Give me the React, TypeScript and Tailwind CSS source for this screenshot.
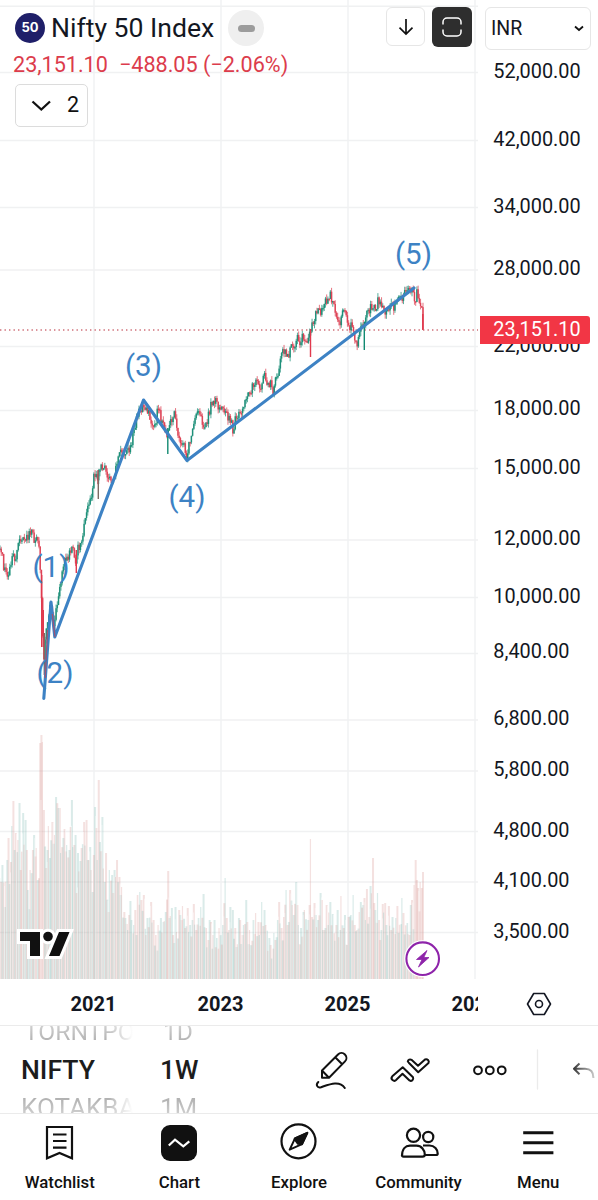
import React from "react";

const PRICE_PATH =
  "0,547 2,555 4,568 7,574 10,568 12,555 13,550 15,560 17,548 20,540 23,541 27,537 30,533 33,530 35,545 37,537 39,545 40,565 41,576 42,632 43,640 44,662 45,640 46,632 48,622 50,605 52,612 54,634 55,620 56,612 57,604 59,588 61,580 63,567 65,560 67,560 69,553 72,548 74,555 76,566 78,548 80,548 82,545 84,525 86,515 88,507 90,500 91,503 92,490 94,475 96,472 98,488 99,470 101,463 103,470 105,465 108,478 110,474 112,482 115,470 118,460 120,453 123,453 126,450 129,453 132,440 134,430 136,420 138,412 140,414 143,402 145,408 147,411 149,415 151,425 153,430 155,425 157,413 159,407 161,420 163,425 165,430 167,440 170,425 172,420 174,412 176,425 178,432 180,445 182,440 184,445 186,460 188,450 190,440 192,435 194,422 196,415 198,412 201,413 203,425 205,430 208,418 211,405 214,400 216,399 218,405 220,408 224,410 227,415 229,420 231,420 233,430 235,421 239,415 243,405 247,400 250,393 252,388 255,380 257,382 259,386 261,387 263,380 265,375 267,382 269,385 271,382 272,393 274,388 276,378 278,373 280,358 282,352 284,352 286,350 287,357 289,353 292,347 295,345 298,338 300,343 302,338 304,340 306,342 308,336 310,335 311,328 313,325 315,318 317,311 319,309 321,315 323,307 325,303 327,302 330,293 332,303 335,311 338,318 340,323 343,310 345,313 347,322 350,328 352,325 354,334 357,344 359,338 361,325 363,328 365,320 367,315 370,309 373,306 376,307 378,300 380,302 383,308 386,311 389,308 392,303 394,308 396,303 399,295 402,298 404,292 407,293 409,291 412,292 414,298 416,307 417,292 419,298 421,303 422,314 423,330";

const VOLUME_PATH =
  "0,878 3,865 5,907 7,860 8,838 9,885 11,862 12,826 13,817 14,801 15,850 16,833 18,840 19,803 20,828 21,870 23,813 25,835 26,820 27,850 28,890 30,890 31,870 33,850 34,835 36,848 38,880 40,845 40.7,743 41.8,735 43,742 44,810 46,868 48,850 49,826 50,858 52,825 53,822 55,835 56.5,797 58,808 60,808 61,853 63,838 65,829 67,845 69,850 71,827 72,800 74,845 76,835 77,893 78,853 80,861 82,848 84,822 86,850 87,820 88,860 90,847 91,870 93,892 94,855 95,807 96,828 98,860 99,780 100.5,842 102,817 103,845 105,882 106,853 108,912 110,870 112,875 113,893 114,870 116,877 117,860 119,877 121,895 122,887 124,912 126,918 128,930 130,901 132,920 134,925 135,910 136,935 138,895 140,892 142,900 144,895 146,935 148,918 151,902 153,930 154,920 156,935 158,925 161,918 163,922 166,912 168,871 169,918 172,908 174,943 175,907 177,932 179,910 181,915 183,906 185,928 188,908 190,925 192,920 194,904 196,930 199,918 201,907 204,894 206,928 208,940 210,920 211,922 213,935 215,920 217,938 220,928 223,925 225.3,878 227,918 229,930 230.5,907 233,910 235,928 237,947 238.5,918 240,920 242,935 244,925 246.5,900 248,922 250,930 253,920 256,913 258,922 260,935 262,902 264,910 266,925 269,938 271,945 274,933 276,940 278,920 279.5,902 282,928 284,917 286.5,890 288,925 290,890 292,905 294,915 296.5,882 298,905 299,925 301,928 303,912 305,910 308,920 310,905 311,839 312,917 314,903 316,915 318,920 320,893 321.5,900 323,930 326,928 327,905 328,925 330,902 333,914 336,925 338,910 340,930 341.5,896 344,928 345,915 347,945 349,917 351,915 353,895 355,925 357,930 359,912 361,902 363,905 364.5,898 366,920 367,889 369,917 370,905 371,886 372.8,858 374,903 376,910 377.5,893 379,920 381,930 383,904 385,903 387,925 389,906 391,930 393,917 396,918 397,906 399,933 402,898 404,913 407,923 409,935 411,905 412,900 414,914 415,885 416,860 417,880 418,888 420,900 421,882 422,888 423,872";

const parse = (s: string) => s.split(" ").map((p) => p.split(",").map(Number));
const prices = parse(PRICE_PATH);
const volumes = parse(VOLUME_PATH);

function at(points: number[][], x: number) {
  for (let i = 1; i < points.length; i++) {
    if (x <= points[i][0]) {
      const [x0, y0] = points[i - 1];
      const [x1, y1] = points[i];
      return y0 + ((y1 - y0) * (x - x0)) / (x1 - x0);
    }
  }
  return points[points.length - 1][1];
}

const noise = (i: number) => {
  const v = Math.sin(i * 127.1 + 11.7) * 43758.5453;
  return v - Math.floor(v);
};

const STEP = 1.219;

function volumeAt(x: number, i: number) {
  const inside = volumes.filter((p) => Math.abs(p[0] - x) <= STEP / 2).map((p) => p[1]);
  return inside.length ? Math.min(...inside) : at(volumes, x) + noise(i + 300) * 22;
}

const BARS = Array.from({ length: 348 }, (_, i) => {
  const x = i * STEP;
  const open = at(prices, Math.max(0, x - STEP)) + (noise(i) - 0.5) * 9;
  const close = at(prices, x) + (noise(i + 1) - 0.5) * 9;
  const high = Math.min(open, close) - noise(i + 500) * 4.5;
  const low = Math.max(open, close) + noise(i + 900) * 4.5;
  return { x, open, close, high, low, up: close < open, volume: volumeAt(x, i) };
});

const RED_SPIKES = [
  [40, 44],
  [310, 312],
  [371.9, 373.6],
  [415, 424],
];

const LONG_WICKS = [
  [41.7, 575, 647, "#e0394d"],
  [43.3, 610, 647, "#e0394d"],
  [44.3, 633, 675, "#8a6560"],
  [76.3, 550, 573, "#e0394d"],
  [98.3, 470, 499, "#7c6a64"],
  [167.8, 428, 454, "#128a72"],
  [310.5, 329, 357, "#e0394d"],
  [364.3, 322, 350, "#128a72"],
  [422.8, 314, 330, "#e0394d"],
] as const;

const LEVELS: [string, number, number][] = [
  ["52,000.00", 72.5, 71],
  ["42,000.00", 140.5, 139],
  ["34,000.00", 207.5, 206],
  ["28,000.00", 270, 268],
  ["22,000.00", 346.5, 345],
  ["18,000.00", 410.5, 408.5],
  ["15,000.00", 468.5, 467],
  ["12,000.00", 540, 538],
  ["10,000.00", 597.5, 596],
  ["8,400.00", 653.5, 651.5],
  ["6,800.00", 720, 718.5],
  ["5,800.00", 771, 769.5],
  ["4,800.00", 831.5, 830],
  ["4,100.00", 882, 880.5],
  ["3,500.00", 932.5, 931],
];

const WAVES: [string, number, number][] = [
  ["(1)", 51, 577],
  ["(2)", 55, 682.5],
  ["(3)", 143.5, 375.5],
  ["(4)", 187, 506.5],
  ["(5)", 413.5, 264],
];

function PriceChart() {
  return (
    <svg width="598" height="979" viewBox="0 0 598 979" className="block font-['Roboto',sans-serif]">
      <g stroke="#f0f1f2" strokeWidth="1.4">
        <path d="M0 6.3H478" />
        {LEVELS.map(([name, y]) => (
          <path key={name} d={`M0 ${y}H478`} />
        ))}
        {[94, 221, 348, 475].map((x) => (
          <path key={x} d={`M${x} 0V979`} />
        ))}
      </g>
      <g>
        {BARS.map((b, i) => {
          const red = RED_SPIKES.some(([from, to]) => b.x > from && b.x < to) || (i + Math.floor(noise(Math.floor(i / 6)) * 2)) % 2 === 0;
          return (
            <rect
              key={i}
              x={b.x - 1}
              y={b.volume}
              width={i % 5 === 0 ? 1.2 : 2}
              height={979 - b.volume}
              fill={red ? "#dc9a98" : "#86beb5"}
              opacity={0.3}
            />
          );
        })}
        {Array.from({ length: 69 }, (_, i) => (
          <rect key={i} x={4 + i * 6.095} y={Math.max(at(volumes, 4 + i * 6.095), 800)} width="0.8" height="180" fill="#fff" opacity="0.6" />
        ))}
      </g>
      <path d="M0 330H478" stroke="#cf7079" strokeWidth="1.3" strokeDasharray="1.4 3.1" />
      {BARS.map((b, i) => (
        <g key={i} fill={b.up ? "#128a72" : "#dc3a4d"}>
          <rect x={b.x - 0.5} y={b.high} width={1} height={b.low - b.high} opacity={0.7} />
          <rect x={b.x - 0.75} y={Math.min(b.open, b.close)} width={1.5} height={Math.max(1.5, Math.abs(b.open - b.close))} opacity={0.85} />
        </g>
      ))}
      {LONG_WICKS.map(([x, y1, y2, color]) => (
        <path key={x} d={`M${x} ${y1}V${y2}`} stroke={color} strokeWidth="1.4" />
      ))}
      <path
        d="M43.8 698.5L51 602L54.8 637L143.5 400L187 460.5L414 288"
        fill="none"
        stroke="#3d82c4"
        strokeWidth="3.1"
        strokeLinecap="round"
        strokeLinejoin="round"
      />
      <path d="M52.3 614L55 637M45.2 678L47.5 630" stroke="#c34257" strokeWidth="1.3" opacity="0.7" />
      <g fill="#3d82c4" fontSize="29.5" textAnchor="middle">
        {WAVES.map(([name, x, y]) => (
          <text key={name} x={x} y={y}>
            {name}
          </text>
        ))}
      </g>
      <g fill="#131722" fontSize="19.9">
        {LEVELS.map(([name, , y]) => (
          <text key={name} x="493.3" y={y + 6.8}>
            {name}
          </text>
        ))}
      </g>
      <path d="M480 316H587a3 3 0 0 1 3 3V341a3 3 0 0 1 -3 3H480Z" fill="#f23645" />
      <text x="493.3" y="336.3" fill="#fff" fontSize="19.9">
        23,151.10
      </text>
      <g stroke="#fff" strokeWidth="6" fill="#fff">
        <path d="M20 932H40V956H30V941H20ZM59 932H69.5L59.5 956H49Z" />
        <circle cx="48" cy="936.5" r="4.8" />
      </g>
      <g fill="#111">
        <path d="M20 932H40V956H30V941H20ZM59 932H69.5L59.5 956H49Z" />
        <circle cx="48" cy="936.5" r="4.8" />
      </g>
      <circle cx="422.7" cy="958.7" r="18.5" fill="#fff" />
      <circle cx="422.7" cy="958.7" r="16.3" fill="#fff" stroke="#8e24aa" strokeWidth="2.1" />
      <path d="M427 950.5L416.5 959.5H422L418.5 967L429 957.5H423.8Z" fill="#8e24aa" stroke="#8e24aa" strokeWidth="0.8" strokeLinejoin="round" />
    </svg>
  );
}

function Header() {
  return (
    <div className="absolute inset-x-0 top-0 flex justify-between pl-[13px] pr-[7px] pt-[7px]">
      <div>
        <div className="flex h-[42px] items-center pl-0.5">
          <span className="flex size-[30px] items-center justify-center rounded-full bg-[#1f1f69] font-['Inter',sans-serif] text-[13px] font-bold text-white">50</span>
          <span className="ml-[6px] mt-px w-[164px] whitespace-nowrap text-[26.6px] leading-none text-[#131722]">Nifty 50 Index</span>
          <span className="ml-[13px] flex size-9 items-center justify-center rounded-full bg-[#efefef]">
            <span className="h-[7px] w-[17px] rounded-full bg-[#9c9c9c]" />
          </span>
        </div>
        <div className="flex h-[32px] items-center gap-[11px] whitespace-nowrap text-[21.6px] text-[#dc3c4c]">
          <span>23,151.10</span>
          <span>−488.05 (−2.06%)</span>
        </div>
        <div className="ml-0.5 mt-[3px] flex h-[43px] w-[73px] items-center justify-between rounded-[5px] border-[1.5px] border-[#dcdcdc] bg-white pl-[15px] pr-[8px] text-[21.5px] text-[#111]">
          <svg width="21" height="12" viewBox="0 0 21 12" fill="none" stroke="#111" strokeWidth="2.3">
            <path d="M1.5 1.5L10.3 9.5L19 1.5" />
          </svg>
          2
        </div>
      </div>
      <div className="flex items-start">
        <button className="flex h-[39px] w-[39px] items-center justify-center rounded-[6px] border-[1.5px] border-[#e6e6e6] bg-white">
          <svg width="16" height="18" viewBox="0 0 16 18" fill="none" stroke="#111" strokeWidth="1.7">
            <path d="M8 1V16M1.5 9.7L8 16L14.5 9.7" />
          </svg>
        </button>
        <button className="ml-[7px] flex size-10 items-center justify-center rounded-[6px] bg-[#2e2e2e]">
          <svg width="20" height="20" viewBox="0 0 20 20" fill="none" stroke="#fff" strokeWidth="1.5">
            <path d="M1 7.5V5a4 4 0 0 1 4-4H15a4 4 0 0 1 4 4V7.5M1 12.5V15a4 4 0 0 0 4 4H15a4 4 0 0 0 4-4V12.5" />
          </svg>
        </button>
        <button className="ml-[13px] flex h-[43px] w-[106px] items-center justify-between rounded-[6px] border-[1.5px] border-[#e6e6e6] bg-white pl-[5px] pr-[6px] text-[19.5px] text-[#131722]">
          INR
          <svg width="10" height="7" viewBox="0 0 10 7" fill="none" stroke="#111" strokeWidth="1.8">
            <path d="M1 1.5L5 5L9 1.5" />
          </svg>
        </button>
      </div>
    </div>
  );
}

function TimeAxis() {
  return (
    <div className="flex h-[47px] items-start border-b-[1.5px] border-[#ebebeb] text-[20px] font-bold text-[#131722]">
      <div className="flex h-[46px] w-[478px] overflow-hidden pl-[30px] pt-[10px]">
        {["2021", "2023", "2025", "2027"].map((year) => (
          <span key={year} className="w-[127px] shrink-0 text-center leading-[30px]">
            {year}
          </span>
        ))}
      </div>
      <svg width="26" height="24" viewBox="0 0 26 24" fill="none" stroke="#131722" strokeWidth="1.6" className="ml-[48px] mt-[13px]" strokeLinejoin="round">
        <path d="M7.7 1.5H18.3L24.5 12L18.3 22.5H7.7L1.5 12Z" />
        <circle cx="13" cy="12" r="3.5" />
      </svg>
    </div>
  );
}

function Wheel({ items, className }: { items: string[]; className: string }) {
  return (
    <div className={`flex h-full flex-col justify-center overflow-hidden whitespace-nowrap leading-[38px] ${className}`}>
      <span className="h-[38px] bg-linear-to-b from-[#e8e8e8] to-[#a0a0a0] bg-clip-text pl-[3px] text-[24.6px] text-transparent">{items[0]}</span>
      <span className="h-[38px] text-[26.6px] font-medium text-[#1c1c1c]">{items[1]}</span>
      <span className="h-[38px] bg-linear-to-b from-[#a0a0a0] to-[#e8e8e8] bg-clip-text text-[26px] text-transparent">{items[2]}</span>
    </div>
  );
}

function Toolbar() {
  return (
    <div className="flex h-[88px] items-center border-b-[1.5px] border-[#ebebeb] pl-[21px]">
      <div className="relative h-full w-[112px]">
        <Wheel items={["TORNTPOWER", "NIFTY", "KOTAKBANK"]} className="w-[112px]" />
        <div className="absolute inset-y-0 right-0 w-[24px] bg-linear-to-r from-transparent to-white" />
      </div>
      <Wheel items={["1D", "1W", "1M"]} className="ml-[27px] w-[61px]" />
      <svg width="377" height="80" viewBox="221 1030 377 80" fill="none" stroke="#111" strokeWidth="2" strokeLinejoin="round" strokeLinecap="round">
        <path d="M322 1077.7V1070.5L338 1054.5A4.9 4.9 0 0 1 345 1061.4L329 1077.7ZM322 1070.5L329 1077.7M335.2 1057.3L342.2 1064.2" />
        <path d="M318.3 1082C315.5 1084.5 317 1088.3 321 1087.2C329 1084.5 339.5 1080 344.8 1088" />
        <path d="M392.3 1076.3L402.7 1067.2L413 1077.3A2.5 2.5 0 0 1 409.5 1080.5L402.5 1073.8L396.3 1079.8A2.6 2.6 0 0 1 392.3 1076.3ZM409 1063L418.2 1072.2L428.5 1063A2.6 2.6 0 0 0 425 1059.5L418 1065.8L411.5 1059.8A2.4 2.4 0 0 0 407.8 1061.5Z" />
        <circle cx="478" cy="1070.3" r="3.9" />
        <circle cx="489.8" cy="1070.3" r="3.9" />
        <circle cx="501.7" cy="1070.3" r="3.9" />
        <path d="M537.5 1050V1089" stroke="#ebebeb" strokeWidth="1.3" />
        <defs>
          <linearGradient id="fade" gradientUnits="userSpaceOnUse" x1="573" y1="0" x2="597" y2="0">
            <stop offset="0" stopColor="#333" />
            <stop offset="1" stopColor="#ddd" />
          </linearGradient>
        </defs>
        <path d="M579.5 1063.5L574 1068.8L579.5 1074.2M574 1068.8H585C590.5 1068.8 593.5 1072 593.5 1078" stroke="url(#fade)" strokeLinecap="butt" />
      </svg>
    </div>
  );
}

const ICONS: Record<string, React.ReactNode> = {
  Watchlist: <path d="M7 4H32V35.3L19.5 30L7 35.3ZM13 11.5H26.5M13 18H26.5M13 24.7H26.5" />,
  Chart: (
    <>
      <rect x="2" y="2" width="36" height="36" rx="9" fill="#111" stroke="none" />
      <path d="M9.8 22.5L16 16.7L24.3 23.3L30.3 18.3" stroke="#fff" />
    </>
  ),
  Explore: (
    <>
      <circle cx="19.5" cy="18.3" r="17" />
      <g strokeLinejoin="round" strokeWidth="2">
        <path d="M28.3 9.8L16 15.3L10.7 26.7L23 21.2Z" />
        <path d="M28.3 9.8L16 15.3L15.6 16.2L19 20.8L23 21.2Z" fill="#111" />
      </g>
    </>
  ),
  Community: (
    <>
      <circle cx="14.5" cy="12.3" r="6.6" />
      <circle cx="29.2" cy="14" r="5.1" />
      <path d="M3 33C3 26 6.5 22.7 11 22.7H17.5C22.5 22.7 25.8 27 25.8 31.5Q25.8 33.7 23.5 33.7H4.5Q3 33.7 3 32ZM24 22.5H30.5C35.5 22.5 38.7 26.5 38.7 30.5Q38.7 32 37 32H26" />
    </>
  ),
  Menu: <path d="M5.2 9.7H35.4M5.2 19.7H35.4M5.2 29.7H35.4" strokeWidth="2.9" />,
};

function BottomNav() {
  return (
    <nav className="grid flex-1 grid-cols-5">
      {Object.entries(ICONS).map(([name, icon]) => (
        <button key={name} className="flex flex-col items-center pt-[9px] text-[16.8px] font-medium leading-[22px] text-[#111]">
          <svg width="40" height="40" viewBox="0 0 40 40" fill="none" stroke="#111" strokeWidth="2.2" className="overflow-visible">
            {icon}
          </svg>
          <span className="mt-[8px]">{name}</span>
        </button>
      ))}
    </nav>
  );
}

export default function App() {
  return (
    <div className="flex h-[1200px] w-[598px] flex-col overflow-hidden bg-white font-['Roboto',sans-serif]">
      <main className="relative h-[979px] shrink-0">
        <PriceChart />
        <Header />
      </main>
      <TimeAxis />
      <Toolbar />
      <BottomNav />
    </div>
  );
}
